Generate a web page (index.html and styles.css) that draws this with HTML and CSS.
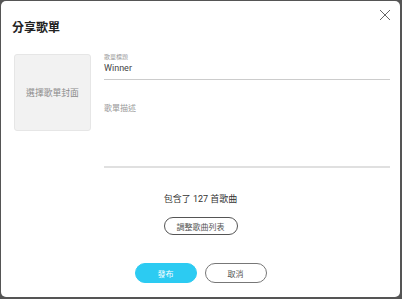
FILE: index.html
```html
<!DOCTYPE html>
<html lang="zh-Hant">
<head>
    <meta charset="UTF-8">
    <meta name="viewport" content="width=device-width, initial-scale=1.0">
    <title>分享歌單</title>
    <link rel="stylesheet" href="styles.css">
</head>
<body>

<div class="dialog">
    <!-- 標題列 -->
    <div class="dialog-header">
        <h2>分享歌單</h2>
        <button class="close-button" aria-label="關閉">
            <svg width="12" height="12" viewBox="0 0 12 12">
                <path d="M1 1 L11 11 M11 1 L1 11" stroke="#666" stroke-width="1" fill="none"/>
            </svg>
        </button>
    </div>

    <!-- 封面與表單 -->
    <div class="dialog-body">
        <div class="cover-picker">選擇歌單封面</div>
        <div class="playlist-form">
            <div class="field">
                <div class="field-label">歌單標題</div>
                <div class="field-value">Winner</div>
            </div>
            <div class="field field-desc">
                <div class="field-placeholder">歌單描述</div>
            </div>
        </div>
    </div>

    <div class="song-count">包含了 127 首歌曲</div>
    <div class="edit-row">
        <button class="edit-button">調整歌曲列表</button>
    </div>

    <!-- 底部按鈕 -->
    <div class="dialog-footer">
        <button class="publish-button">發布</button>
        <button class="cancel-button">取消</button>
    </div>
</div>

</body>
</html>
```

FILE: styles.css
```css
body {
    margin: 0;
    padding: 0;
    width: 402px;
    height: 299px;
    background-color: #555;
    font-family: Roboto, "Noto Sans CJK TC", sans-serif;
    overflow: hidden;
}

.dialog {
    margin: 1px 0 0 1px;
    width: 399px;
    height: 296px;
    background-color: #fff;
    border-radius: 5px;
    display: flex;
    flex-direction: column;
}

/* 標題列 */
.dialog-header {
    display: flex;
    justify-content: space-between;
    align-items: flex-start;
    padding: 8px 9px 0 11px;
}

.dialog-header h2 {
    margin: 11px 0 0 0;
    font-size: 12px;
    line-height: 16px;
    font-weight: 700;
    color: #222;
}

.close-button {
    width: 12px;
    height: 12px;
    padding: 0;
    border: none;
    background: none;
    display: flex;
}

/* 封面與表單 */
.dialog-body {
    display: flex;
    gap: 13px;
    margin-top: 18px;
    padding: 0 10px 0 13px;
}

.cover-picker {
    width: 75px;
    height: 75px;
    flex-shrink: 0;
    background-color: #f2f2f2;
    border: 1px solid #e6e6e6;
    border-radius: 3px;
    display: flex;
    justify-content: center;
    align-items: center;
    font-size: 8.8px;
    color: #8a8a8a;
}

.playlist-form {
    flex: 1;
    display: flex;
    flex-direction: column;
}

.field {
    border-bottom: 1px solid #ccc;
    padding-bottom: 5px;
}

.field-label {
    font-size: 6px;
    line-height: 6px;
    color: #999;
    margin-bottom: 2px;
}

.field-value {
    font-size: 9px;
    line-height: 12px;
    color: #444;
}

.field-desc {
    margin-top: 24px;
    height: 62px;
    padding-bottom: 0;
    border-bottom: 2px solid #e0e0e0;
}

.field-placeholder {
    font-size: 8px;
    line-height: 10px;
    color: #999;
}

/* 歌曲數量 */
.song-count {
    margin-top: 25px;
    text-align: center;
    font-size: 9px;
    line-height: 12px;
    color: #333;
}

.edit-row {
    display: flex;
    justify-content: center;
    margin-top: 12px;
}

.edit-button {
    height: 18px;
    padding: 0 12px;
    border: 1px solid #555;
    border-radius: 9px;
    background: #fff;
    font-family: inherit;
    font-size: 8px;
    color: #555;
}

/* 底部按鈕 */
.dialog-footer {
    display: flex;
    justify-content: center;
    gap: 8px;
    margin-top: 28px;
}

.dialog-footer button {
    width: 62px;
    height: 20px;
    border-radius: 10px;
    font-family: inherit;
    font-size: 8px;
    padding: 0;
}

.publish-button {
    background-color: #2ccbf2;
    border: 1px solid #2ccbf2;
    color: #fff;
}

.cancel-button {
    background-color: #fff;
    border: 1px solid #777;
    color: #555;
}
```
